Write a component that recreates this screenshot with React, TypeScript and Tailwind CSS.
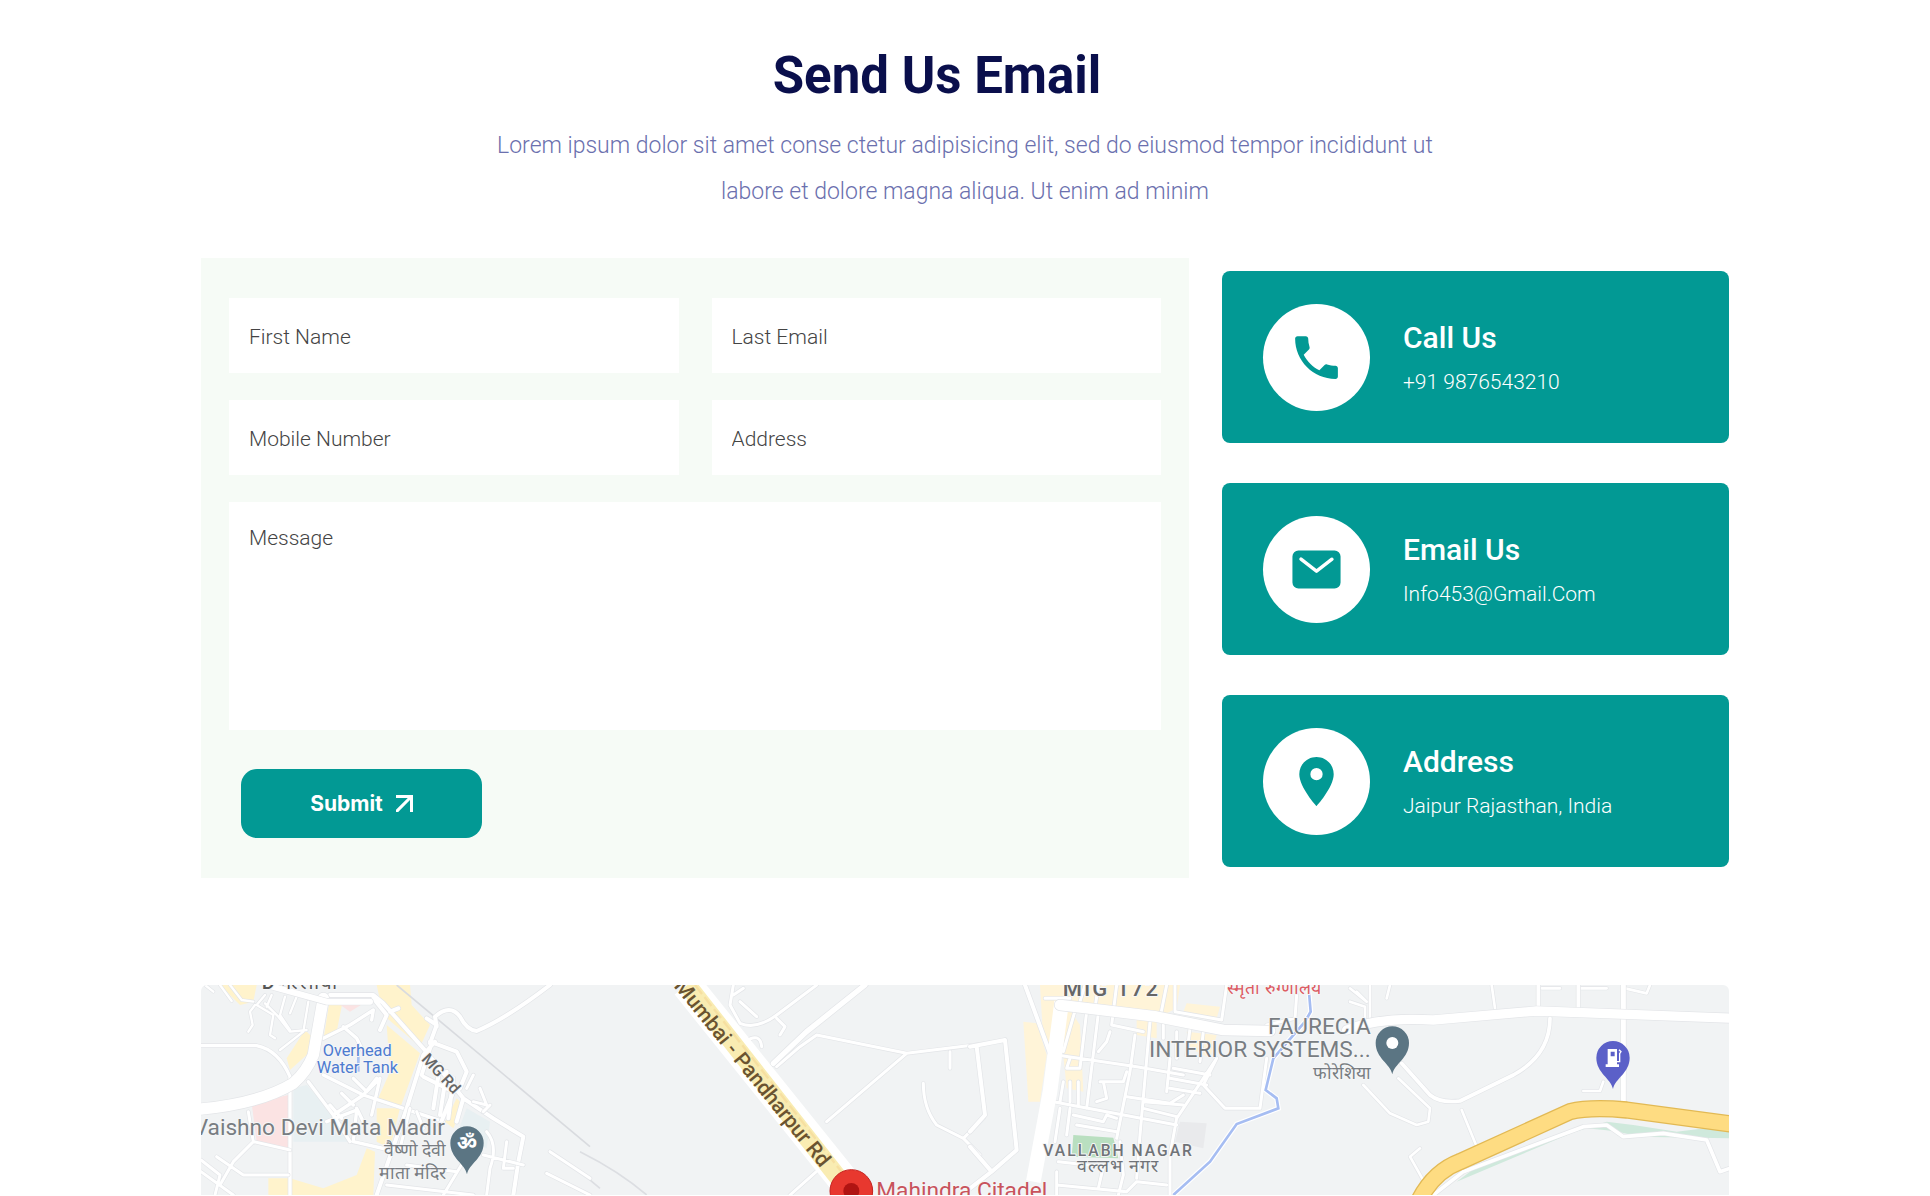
import type { ReactNode } from "react";
import { MdPhone, MdPlace } from "react-icons/md";
import { IoMail } from "react-icons/io5";

type CardProps = { icon: ReactNode; title: string; children: ReactNode };

function ContactCard({ icon, title, children }: CardProps) {
  return (
    <article className="flex h-[172px] items-center gap-[33px] rounded-lg bg-[#029994] px-[41px] text-white">
      <div className="flex size-[107px] shrink-0 items-center justify-center rounded-full bg-white text-[#029994]">
        {icon}
      </div>
      <div className="pt-[6px]">
        <h3 className="text-[30px] font-medium leading-[44px]">{title}</h3>
        <div className="text-[21px] font-light leading-[44px]">{children}</div>
      </div>
    </article>
  );
}

type FieldProps = { label: string; name: string; type?: string };

function Field({ label, name, type = "text" }: FieldProps) {
  return (
    <input
      name={name}
      type={type}
      aria-label={label}
      placeholder={label}
      className="block h-[75px] w-full bg-white px-5 pt-[2px] text-[21px] font-light text-[#444] outline-none placeholder:text-[#444]"
    />
  );
}

type RoadProps = { d: string; w?: number };

function Road({ d, w = 9 }: RoadProps) {
  return (
    <g fill="none" strokeLinejoin="round" strokeLinecap="round">
      <path d={d} stroke="#e3e5e8" strokeWidth={w + 4} />
      <path d={d} stroke="#fff" strokeWidth={w} />
    </g>
  );
}

function Pin({ x, y, color, children }: { x: number; y: number; color: string; children?: ReactNode }) {
  return (
    <g transform={`translate(${x} ${y})`}>
      <path d="M0 94C-6 62-50 46-50 0A50 50 0 0 1 50 0C50 46 6 62 0 94Z" fill={color} />
      {children}
    </g>
  );
}

const halo = { paintOrder: "stroke" as const, stroke: "#f5f6f7", strokeWidth: 6, strokeLinejoin: "round" as const };

function WestDistrict() {
  return (
    <g transform="translate(-33 -30)">
      <path d="M90 30H200L190 80L150 90ZM560 30H660L665 90L720 150L690 215L580 120ZM420 70H460L440 170L400 195ZM345 165L370 190L350 240L300 285L290 250ZM590 150L690 235L630 400L560 380L600 290ZM560 400H630L600 520L560 500ZM800 370L820 390L790 460L765 440ZM235 610H300L400 640L500 600L530 520L555 530L550 660H235Z" fill="#fff3cc" />
      <path d="M185 385L295 360V520L200 500ZM430 75L545 70L480 110Z" fill="#fbe3e3" />
      <path d="M310 340L350 330L450 440L480 500L310 500ZM830 400L900 440L890 520L800 480Z" fill="#e8f0f2" />
      <path d="M620 30L1200 515" stroke="#d9dbdf" strokeWidth="5" fill="none" />
      <Road w={7} d="M45 30L70 50M90 30L125 78M120 30L155 75L190 80M195 90L180 110L188 150L175 170M225 60L200 90L250 120L240 180L255 190M225 85L265 125L300 170L350 165M245 60L230 95M285 65L270 120L300 165M320 65L300 115M355 80L340 170L270 225" />
      <Road w={10} d="M33 212H200Q265 225 300 305V660M355 320L430 420L520 360L560 310M400 190L480 150L550 105L545 135M460 155L500 190L520 230M400 300L520 360L640 400L760 440M420 390L455 430M455 355L490 390M490 310L530 350L570 310L545 420M410 440L500 405L490 500L600 525M430 420L480 500M500 400L520 440" />
      <Road w={12} d="M420 60H550L580 85L700 220L820 370L910 430L1000 485L985 560L970 660M550 70L590 120L570 165M600 110L625 100M720 205L740 150L710 130M735 200L700 240L650 400L560 660M720 200L800 230L830 290L810 340M700 305L790 350L750 450M720 220L695 300M750 270L730 400M770 290L750 420M790 310L775 430M820 370L800 440M740 155L735 125Q780 85 810 125Q830 165 860 168Q950 130 1080 30" />
      <Road w={9} d="M660 400L630 520M680 410L700 460M870 340L890 390L850 380M900 390L880 410M850 300L830 340M33 590L130 660M33 555L90 600L75 660M80 545L160 600H295M90 630L130 560L190 500L300 525M175 410L190 500M760 660L820 560L800 490M880 540L1000 570M890 470Q925 510 900 580L890 660M950 500L940 580H970M650 570L800 590M590 630L850 660M1080 530L1200 610M1070 595L1200 660" />
      <Road w={34} d="M400 70L370 240Q350 290 310 325Q210 385 33 402" />
      <Road w={18} d="M230 30L410 80H540" />
      <path d="M505 205V290" stroke="#a9c2f3" strokeWidth="8" />
      <g fontFamily="Roboto" {...halo}>
        <text x="215" y="43" fontSize="60" fontWeight="500" fill="#555">D गल्लीचा</text>
        <g fill="#4d7bd0" fontSize="49">
          <text x="398" y="243">Overhead</text>
          <text x="380" y="295">Water Tank</text>
        </g>
        <text transform="translate(692 254) rotate(47)" fontSize="48" fontWeight="500" fill="#666">MG Rd</text>
        <g fill="#787d82" textAnchor="end">
          <text x="765" y="479" fontSize="68">Vaishno Devi Mata Madir</text>
          <text x="768" y="543" fontSize="53">वैष्णो देवी</text>
          <text x="768" y="612" fontSize="53">माता मंदिर</text>
        </g>
      </g>
      <Pin x={831} y={504} color="#5b7583">
        <text x="0" y="22" fontFamily="Noto Sans" fontSize="60" fontWeight="700" fill="#fff" textAnchor="middle">ॐ</text>
      </Pin>
    </g>
  );
}

function HighwayDistrict() {
  return (
    <g transform="translate(1137 -30)">
      <path d="M0 530Q120 590 200 660M0 590L60 640" stroke="#dcdee2" strokeWidth="5" fill="none" />
      <Road w={9} d="M460 30L450 90L480 145Q530 165 590 120L710 30M460 60L490 40M480 80L530 125M590 130L615 155L600 180M495 200Q540 170 545 215M740 440L980 235L710 180L660 215L590 275M710 180L980 235L1200 208M1110 230V280M1030 325Q1030 400 1070 450L1150 490L1210 430M1150 490L1200 540M630 660L720 580" />
      <Road w={16} d="M580 265L680 170L855 30" />
      <path d="M320 30L810 640" stroke="#fff" strokeWidth="92" />
      <path d="M322 30L800 640" stroke="#f9ecb2" strokeWidth="54" />
      <path d="M345 30L800 610" stroke="#f6dfa0" strokeWidth="7" strokeDasharray="34 12" />
      <text transform="translate(280 34) rotate(51)" fontFamily="Roboto" fontSize="63" fontWeight="500" fill="#6a5330">Mumbai - Pandharpur Rd</text>
    </g>
  );
}

function NagarDistrict() {
  return (
    <g transform="translate(2307 -30)">
      <path d="M210 30H630L620 100L560 130V190L500 180V120L290 90L330 150L340 350L290 340L280 240L220 200ZM160 140L200 145L230 240L210 380H175ZM650 85L750 95L740 130L640 110ZM650 170L740 180L720 250L660 220Z" fill="#fff4d8" />
      <path d="M630 440L710 445L700 520L615 500Z" fill="#e9eaec" />
      <path d="M310 480L430 488L445 550L305 545Z" fill="#b9dfc0" />
      <Road w={12} d="M165 30L240 235M0 215L105 195L140 525L65 590L0 640M20 215L45 420L0 470M65 590L0 515" />
      <Road w={9} d="M225 70H300M345 30L330 80M385 30L375 100M440 30L430 110M590 30L570 130M615 30V110L755 135L770 30M660 160L650 240M580 150V190M700 170L690 260M620 170V250M260 240L500 275L640 300M320 90L280 230M350 110L330 280H290L300 250M385 115L350 400M430 110L425 150L520 170M420 170L410 200L385 230M495 180L480 290L440 490M540 140L510 480M600 250L590 350M390 320H460L470 290M400 320L410 370L380 380M250 380L620 450M740 250L620 430L600 540M470 365L600 385L640 360M610 280L720 300M600 310L710 330M600 340L690 355M520 380L640 390M520 400L620 425M280 320L270 380M300 320V380M325 320V390M270 400L255 500M300 400L290 480M310 420L400 440L410 420L440 430M320 450L440 470M265 560L400 575L385 640M450 500L460 600L445 660M260 630L470 650L500 620L590 630M260 590V660M600 540V660M510 480L500 610M980 60L975 130L890 150M740 250L700 330L765 400H870L890 250" />
      <path d="M1015 30L1022 110L1005 140L910 250L887 345L920 370L925 400L800 447L720 560L610 660" fill="none" stroke="#fff" strokeWidth="15" />
      <path d="M1015 30L1022 110L1005 140L910 250L887 345L920 370L925 400L800 447L720 560L610 660" fill="none" stroke="#a6bdf2" strokeWidth="8" />
      <path d="M275 80L240 350L190 620" fill="none" stroke="#fff" strokeWidth="44" />
      <Road w={32} d="M270 90L560 125L760 165L900 168" />
      <g fontFamily="Roboto" {...halo}>
        <text x="278" y="64" fontSize="66" fontWeight="500" letterSpacing="6" fill="#666">MIG 172</text>
        <text x="772" y="58" fontSize="53" fill="#dc5a62">स्मृती रुग्णालय</text>
        <text x="220" y="543" fontSize="47" fontWeight="500" letterSpacing="6" fill="#707378">VALLABH NAGAR</text>
        <text x="322" y="590" fontSize="53" letterSpacing="3" fill="#707378">वल्लभ नगर</text>
      </g>
    </g>
  );
}

function EastDistrict() {
  return (
    <g transform="translate(3447 -30)">
      <path d="M770 440L850 450L980 470L1140 450V490L860 485Q800 465 700 460L320 620L400 560Z" fill="#cfe9dc" />
      <Road w={8} d="M60 30V130M0 40L50 80L20 50M0 80L45 95V130M120 30L110 70M425 30L435 100M575 40H630M690 40H770M825 40L890 55L900 30M145 310L240 400L235 440L200 450L120 415L40 330M335 405L378 510M210 520L180 545L222 620M700 348H750L760 320" />
      <Road w={11} d="M250 660L340 590L700 455L770 450L820 485L940 475L1070 495L1110 590L1140 580M155 265L240 360Q270 385 330 378L490 300Q600 240 600 130M565 30V100M685 30V100" />
      <Road w={15} d="M820 30V385" />
      <Road w={28} d="M-10 165Q90 125 250 135L560 108L1150 130" />
      <path d="M205 680Q250 590 330 560L660 410Q720 395 830 405L1150 448" fill="none" stroke="#e2b954" strokeWidth="52" />
      <path d="M205 680Q250 590 330 560L660 410Q720 395 830 405L1150 448" fill="none" stroke="#fedc82" strokeWidth="44" />
      <g fontFamily="Roboto" fill="#787d82" textAnchor="end" {...halo}>
        <text x="62" y="178" fontSize="68">FAURECIA</text>
        <text x="62" y="247" fontSize="68">INTERIOR SYSTEMS...</text>
        <text x="62" y="311" fontSize="53">फोरेशिया</text>
      </g>
      <Pin x={127} y={204} color="#5b7583">
        <circle r="18" fill="#fff" />
      </Pin>
      <Pin x={789} y={248} color="#5b60c8">
        <path d="M-16-26H12V20H18V28H-22V20H-16ZM-7-18V-4H5V-18Z" fill="#fff" fillRule="evenodd" />
        <path d="M12 12H20V-12L24-18L18-24" stroke="#fff" strokeWidth="4" fill="none" />
      </Pin>
    </g>
  );
}

function LocationMap() {
  return (
    <svg
      role="img"
      aria-label="Map of the area around Mahindra Citadel"
      viewBox="0 0 4584 630"
      preserveAspectRatio="xMidYMin slice"
      className="block h-[210px] w-full rounded-t-md bg-[#f1f3f4]"
    >
      <HighwayDistrict />
      <WestDistrict />
      <NagarDistrict />
      <EastDistrict />
      <circle cx="1951" cy="618" r="64" fill="#e8382f" stroke="#c5221f" strokeWidth="3" />
      <circle cx="1951" cy="618" r="24" fill="#b01412" />
      <text x="2026" y="638" fontFamily="Roboto" fontSize="68" fill="#c8535c" {...halo}>Mahindra Citadel</text>
    </svg>
  );
}

export default function App() {
  return (
    <main className="min-h-screen bg-white px-4 pt-[33px] font-['Roboto',sans-serif]">
      <div className="mx-auto w-full max-w-[1528px]">
        <header className="text-center">
          <h2 className="pr-14 text-[51px] font-bold leading-[86px] text-[#0a0f4c]">Send Us Email</h2>
          <p className="mx-auto mt-1 max-w-[960px] text-[23px] font-light leading-[46px] text-[#6b70ae]">
            Lorem ipsum dolor sit amet conse ctetur adipisicing elit, sed do eiusmod tempor incididunt ut labore et dolore magna aliqua. Ut enim ad minim
          </p>
        </header>

        <section className="mt-[43px] grid grid-cols-1 gap-[33px] lg:grid-cols-[988fr_507fr]">
          <form className="bg-[#f6fbf6] px-7 py-10" onSubmit={(e) => e.preventDefault()}>
            <div className="grid grid-cols-1 gap-x-[33px] gap-y-[27px] sm:grid-cols-2">
              <Field name="firstName" label="First Name" />
              <Field name="lastEmail" label="Last Email" />
              <Field name="mobile" label="Mobile Number" type="tel" />
              <Field name="address" label="Address" />
              <textarea
                name="message"
                aria-label="Message"
                placeholder="Message"
                className="block h-[228px] w-full resize-none bg-white px-5 pt-[21px] text-[21px] font-light leading-[30px] text-[#444] outline-none placeholder:text-[#444] sm:col-span-2"
              />
            </div>
            <button type="submit" className="ml-3 mt-[39px] flex h-[69px] w-[241px] items-center justify-center gap-[13px] rounded-2xl bg-[#029994] font-[Inter,sans-serif] text-[21px] font-bold text-white">
              Submit
              <svg viewBox="0 0 17 17" className="size-[17px]" fill="currentColor" aria-hidden="true">
                <path d="M0 0H17V17H14V5L2.200 17H0V14.800L11.800 3H0Z" />
              </svg>
            </button>
          </form>

          <div className="flex flex-col gap-10 pt-[13px]">
            <ContactCard icon={<MdPhone size={57} />} title="Call Us">
              <a href="tel:+919876543210">+91 9876543210</a>
            </ContactCard>
            <ContactCard icon={<IoMail size={55} />} title="Email Us">
              <a href="mailto:Info453@Gmail.Com">Info453@Gmail.Com</a>
            </ContactCard>
            <ContactCard icon={<MdPlace size={59} />} title="Address">
              <address className="not-italic">Jaipur Rajasthan, India</address>
            </ContactCard>
          </div>
        </section>

        <section className="mt-[107px]">
          <LocationMap />
        </section>
      </div>
    </main>
  );
}
